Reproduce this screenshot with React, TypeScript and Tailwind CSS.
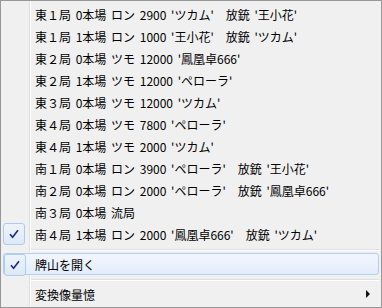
import { ReactNode } from 'react'

interface Item {
  label: string
  checked?: boolean
}

const rounds: Item[] = [
  { label: "東１局 0本場 ロン 2900 'ツカム'　放銃 '王小花'" },
  { label: "東１局 1本場 ロン 1000 '王小花'　放銃 'ツカム'" },
  { label: "東２局 0本場 ツモ 12000 '鳳凰卓666'" },
  { label: "東２局 1本場 ツモ 12000 'ペローラ'" },
  { label: "東３局 0本場 ツモ 12000 'ツカム'" },
  { label: "東４局 0本場 ツモ 7800 'ペローラ'" },
  { label: "東４局 1本場 ツモ 2000 'ツカム'" },
  { label: "南１局 0本場 ロン 3900 'ペローラ'　放銃 '王小花'" },
  { label: "南２局 0本場 ロン 2000 'ペローラ'　放銃 '鳳凰卓666'" },
  { label: "南３局 0本場 流局" },
  { label: "南４局 1本場 ロン 2000 '鳳凰卓666'　放銃 'ツカム'", checked: true },
]

const Check = () => (
  <div className="absolute left-0 top-0 w-[22px] h-[22px] rounded-[3px] border border-[#aecbee] bg-gradient-to-b from-[#eef4fc] to-[#dde8f8] flex items-center justify-center">
    <svg width="10" height="10" viewBox="0 0 10 10">
      <path d="M1 5.2 L3.6 8.3 L9 1.2" fill="none" stroke="#1c2a80" strokeWidth="1.6" />
    </svg>
  </div>
)

const Row = ({ children, checked, active, arrow }: { children: ReactNode; checked?: boolean; active?: boolean; arrow?: boolean }) => (
  <div
    className={
      'relative h-[22px] leading-[23px] pl-[32px] pr-3 whitespace-pre ' +
      (active ? 'rounded-[3px] border border-[#b2cff2] bg-gradient-to-b from-[#f2f7fe] to-[#e3edfb]' : '')
    }
  >
    {checked && <Check />}
    <span className={active ? 'relative -top-px -left-px' : ''}>{children}</span>
    {arrow && (
      <svg className="absolute right-[9px] top-[7px]" width="4" height="8" viewBox="0 0 4 8">
        <path d="M0 0 L4 4 L0 8 Z" fill="#111" />
      </svg>
    )}
  </div>
)

const Separator = () => (
  <div className="h-[8px] pl-[28px] pt-[4px]">
    <div className="h-px bg-[#e0e0e0]" />
    <div className="h-px bg-white" />
  </div>
)

export default function App() {
  return (
    <div className="w-[382px] h-[308px] bg-[#f0f0f0] border border-[#979797] text-[12px] text-black [word-spacing:2px]"
      style={{ fontFamily: '"Noto Sans CJK JP", "Noto Sans", sans-serif' }}>
      <div className="relative h-full pt-[2px] pl-[2px] pr-[2px]">
        <div className="absolute left-[28px] top-0 bottom-0 w-[2px] flex">
          <div className="w-px bg-[#e0e0e0]" />
          <div className="w-px bg-white" />
        </div>
        <div className="relative">
          {rounds.map((r) => (
            <Row key={r.label} checked={r.checked}>{r.label}</Row>
          ))}
          <Separator />
          <Row checked active>牌山を開く</Row>
          <Separator />
          <Row arrow>変換像量憶</Row>
        </div>
      </div>
    </div>
  )
}
